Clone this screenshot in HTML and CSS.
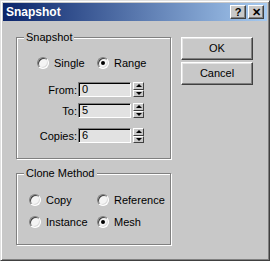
FILE: index.html
```html
<!DOCTYPE html>
<html lang="en">
<head>
    <meta charset="UTF-8">
    <title>Snapshot</title>
    <link rel="stylesheet" href="styles.css">
</head>
<body>
    <div class="window">
        <div class="titlebar">
            <span class="title">Snapshot</span>
            <div class="title-buttons">
                <div class="tbtn">?</div>
                <div class="tbtn">&#x2715;</div>
            </div>
        </div>
        <div class="content">
            <div class="left">
                <div class="group group-snapshot">
                    <span class="group-title">Snapshot</span>
                    <div class="radios">
                        <label class="radio"><span class="dot"></span>Single</label>
                        <label class="radio"><span class="dot checked"></span>Range</label>
                    </div>
                    <div class="field from">
                        <span class="label">From:</span>
                        <div class="input">0</div>
                        <div class="spinner"><div class="up"></div><div class="down"></div></div>
                    </div>
                    <div class="field to">
                        <span class="label">To:</span>
                        <div class="input">5</div>
                        <div class="spinner"><div class="up"></div><div class="down"></div></div>
                    </div>
                    <div class="field copies">
                        <span class="label">Copies:</span>
                        <div class="input">6</div>
                        <div class="spinner"><div class="up"></div><div class="down"></div></div>
                    </div>
                </div>
                <div class="group group-clone">
                    <span class="group-title">Clone Method</span>
                    <div class="radios clone-grid">
                        <label class="radio"><span class="dot"></span>Copy</label>
                        <label class="radio"><span class="dot"></span>Reference</label>
                        <label class="radio"><span class="dot"></span>Instance</label>
                        <label class="radio"><span class="dot checked"></span>Mesh</label>
                    </div>
                </div>
            </div>
            <div class="right">
                <div class="button">OK</div>
                <div class="button">Cancel</div>
            </div>
        </div>
    </div>
</body>
</html>
```

FILE: styles.css
```css
body {
    margin: 0;
    padding: 0;
    font-family: "Liberation Sans", Arial, sans-serif;
    font-size: 11px;
    color: #000;
    background-color: #c8c8c8;
}

.window {
    width: 270px;
    height: 261px;
    box-sizing: border-box;
    padding: 2px;
    background-color: #c8c8c8;
    border: 1px solid;
    border-color: #e0e0e0 #404040 #404040 #e0e0e0;
    box-shadow: inset 1px 1px 0 #fff, inset -1px -1px 0 #808080;
}

.titlebar {
    height: 18px;
    display: flex;
    align-items: center;
    padding: 0 3px 0 3px;
    background: linear-gradient(to right, #0a246a, #a6caf0);
    color: white;
}

.title {
    font-weight: bold;
    font-size: 12px;
}

.title-buttons {
    margin-left: auto;
    display: flex;
    gap: 2px;
}

.tbtn {
    width: 16px;
    height: 14px;
    box-sizing: border-box;
    background-color: #c8c8c8;
    color: #000;
    font-weight: bold;
    font-size: 11px;
    line-height: 12px;
    text-align: center;
    border: 1px solid;
    border-color: #fff #404040 #404040 #fff;
    box-shadow: inset -1px -1px 0 #808080;
}

.content {
    display: flex;
    padding: 16px 0 0 13px;
}

.left {
    width: 155px;
}

.group {
    position: relative;
    box-sizing: border-box;
    width: 155px;
    border: 1px solid #808080;
    box-shadow: 1px 1px 0 #fff, inset 1px 1px 0 #fff;
}

.group-title {
    position: absolute;
    top: -7px;
    left: 7px;
    padding: 0 2px;
    line-height: 13px;
    background-color: #c8c8c8;
}

.group-snapshot {
    height: 122px;
    padding-top: 19px;
}

.group-clone {
    height: 72px;
    margin-top: 14px;
    padding-top: 20px;
}

.radios {
    display: grid;
    grid-template-columns: 60px auto;
    padding-left: 20px;
}

.clone-grid {
    grid-template-columns: 68px auto;
    row-gap: 10px;
    padding-left: 12px;
}

.radio {
    display: flex;
    align-items: center;
    height: 12px;
}

.dot {
    position: relative;
    width: 12px;
    height: 12px;
    box-sizing: border-box;
    margin-right: 5px;
    border-radius: 50%;
    border: 1px solid;
    border-color: #808080 #fff #fff #808080;
    background-color: #f4f4f4;
    box-shadow: inset 1px 1px 0 #404040, inset -1px -1px 0 #dcdcdc;
}

.dot.checked::after {
    content: "";
    position: absolute;
    left: 3px;
    top: 3px;
    width: 4px;
    height: 4px;
    border-radius: 50%;
    background-color: #000;
}

.field {
    display: flex;
    align-items: center;
    height: 15px;
}

.field.from {
    margin-top: 13px;
}

.field.to {
    margin-top: 6px;
}

.field.copies {
    margin-top: 10px;
}

.field .label {
    width: 60px;
    text-align: right;
    margin-right: 1px;
}

.input {
    width: 53px;
    height: 15px;
    box-sizing: border-box;
    padding-left: 3px;
    line-height: 13px;
    background-color: #e2e2e2;
    border: 1px solid;
    border-color: #808080 #fff #fff #808080;
    box-shadow: inset 1px 1px 0 #000;
}

.spinner {
    margin-left: 2px;
    width: 11px;
    height: 15px;
    display: flex;
    flex-direction: column;
}

.spinner div {
    position: relative;
    flex: 1;
    box-sizing: border-box;
    background-color: #c8c8c8;
    border: 1px solid;
    border-color: #fff #404040 #404040 #fff;
}

.spinner div::after {
    content: "";
    position: absolute;
    left: 2px;
    top: 1px;
    border-left: 3px solid transparent;
    border-right: 3px solid transparent;
}

.spinner .up::after {
    border-bottom: 3px solid #000;
}

.spinner .down::after {
    border-top: 3px solid #000;
}

.right {
    margin-left: 10px;
    display: flex;
    flex-direction: column;
    gap: 2px;
}

.button {
    width: 72px;
    height: 23px;
    box-sizing: border-box;
    line-height: 21px;
    text-align: center;
    border: 1px solid;
    border-color: #fff #404040 #404040 #fff;
    box-shadow: inset -1px -1px 0 #808080, inset 1px 1px 0 #e4e4e4;
}
```
